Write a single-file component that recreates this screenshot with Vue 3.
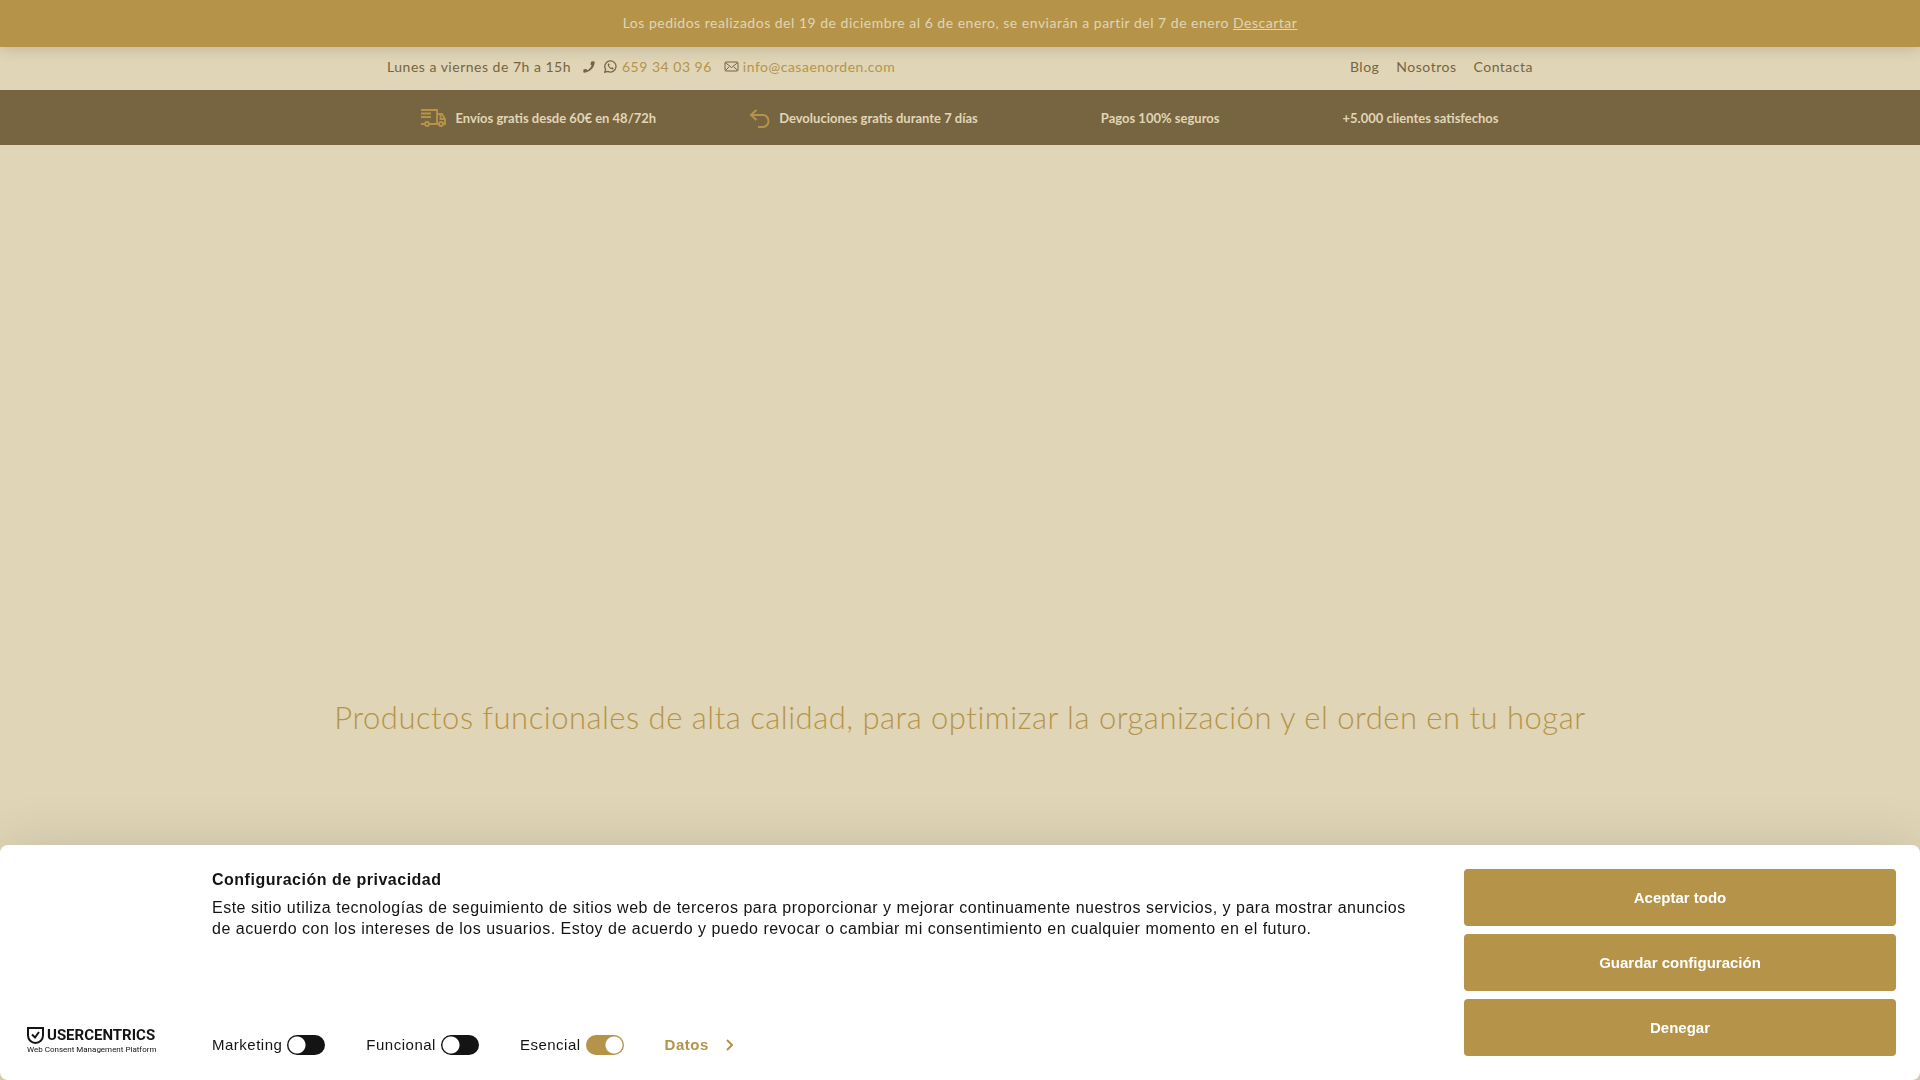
<script setup>
import { ref } from "vue";

const showNotice = ref(true);
const showPrivacy = ref(true);

const menu = ["Blog", "Nosotros", "Contacta"];

const benefits = [
  { text: "Envíos gratis desde 60€ en 48/72h", icon: "truck" },
  { text: "Devoluciones gratis durante 7 días", icon: "return" },
  { text: "Pagos 100% seguros", icon: "" },
  { text: "+5.000 clientes satisfechos", icon: "" },
];

const categories = ref([
  { id: "marketing", label: "Marketing", checked: false, essential: false },
  { id: "functional", label: "Funcional", checked: false, essential: false },
  { id: "essential", label: "Esencial", checked: true, essential: true },
]);

function setAll(value) {
  categories.value.forEach((category) => {
    if (!category.essential) category.checked = value;
  });
  showPrivacy.value = false;
}
</script>

<template>
  <div class="page">
    <div v-if="showNotice" class="notice">
      Los pedidos realizados del 19 de diciembre al 6 de enero, se enviarán a partir del 7 de enero
      <a href="#" @click.prevent="showNotice = false">Descartar</a>
    </div>

    <header>
      <div class="topbar">
        <div class="contact">
          <span>Lunes a viernes de 7h a 15h</span>
          <span class="phone">
            <svg class="icon-phone" viewBox="0 0 12 12" aria-hidden="true">
              <path d="M8.6.5 11 .3c.4 0 .7.3.7.8C11.5 6.8 7 11.3 1.2 11.7c-.5 0-.8-.3-.9-.7L.4 8.9c0-.3.2-.6.6-.6l2-.3c.3 0 .5.1.7.4l.5.9C6.2 8.4 7.8 6.7 8.7 4.6l-.8-.6a.7.7 0 0 1-.3-.7L8 1c0-.3.3-.5.6-.5z" />
            </svg>
            <svg class="icon-whatsapp" viewBox="0 0 13 13" aria-hidden="true">
              <path class="line" d="M.8 12.2l.8-2.9A5.6 5.6 0 1 1 3.8 11.4z" />
              <path d="M4.6 3.500c-.8.3-1 1.2-.7 2 .7 1.900 2 3.200 3.900 3.800.9.300 1.800-.2 1.900-1.200 0-.2-1.500-1-1.700-.9l-.7.8C6.300 7.600 5.500 6.800 5 5.800l.6-.7c.1-.2-.4-1.600-.6-1.600z" />
            </svg>
            <a href="tel:659340396">659 34 03 96</a>
          </span>
          <span class="mail">
            <svg class="icon-mail" viewBox="0 0 15 11" aria-hidden="true">
              <rect x="1" y="1" width="13" height="9" rx="1" />
              <path d="M1.5 1.8 7.5 6.5l6-4.7M1.8 9.2l3.4-3.500M13.2 9.2 9.8 5.7" />
            </svg>
            <a href="mailto:info@casaenorden.com">info@casaenorden.com</a>
          </span>
        </div>
        <nav class="menu">
          <a v-for="item in menu" :key="item" href="#">{{ item }}</a>
        </nav>
      </div>

      <ul class="benefits">
        <li v-for="benefit in benefits" :key="benefit.text">
          <span class="benefit-icon">
            <svg v-if="benefit.icon === 'truck'" width="25" height="18" viewBox="0 0 25 18" aria-hidden="true">
              <path d="M0 1h16v14M0 4.500h10M0 8h10M0 15h4M8 15h10M16 5h5l3 5v5h-2M19.500 5v5H24" />
              <circle cx="6" cy="15" r="2" />
              <circle cx="20" cy="15" r="2" />
            </svg>
            <svg v-else-if="benefit.icon === 'return'" width="21" height="19" viewBox="0 0 21 19" aria-hidden="true">
              <path class="thick" d="M7.500 1 2 6l5.500 5M2 6h12a5.500 6 0 0 1 0 12H9" />
            </svg>
          </span>
          {{ benefit.text }}
        </li>
      </ul>
    </header>

    <main>
      <div class="slider"></div>
      <h1>Productos funcionales de alta calidad, para optimizar la organización y el orden en tu hogar</h1>
    </main>

    <section v-if="showPrivacy" class="privacy" aria-labelledby="privacy-title">
      <a class="brand" href="#">
        <span class="brand-name">
          <svg width="17" height="17" viewBox="0 0 17 17" aria-hidden="true">
            <path d="M1 1h15v7.500a7.500 7.500 0 0 1-15 0z" />
            <path class="check" d="M5 7.500 8 10.500 12 5" />
          </svg>
          USERCENTRICS
        </span>
        <span class="brand-sub">Web Consent Management Platform</span>
      </a>

      <div class="privacy-body">
        <div>
          <h2 id="privacy-title">Configuración de privacidad</h2>
          <p>
            Este sitio utiliza tecnologías de seguimiento de sitios web de terceros para proporcionar y mejorar
            continuamente nuestros servicios, y para mostrar anuncios de acuerdo con los intereses de los usuarios.
            Estoy de acuerdo y puedo revocar o cambiar mi consentimiento en cualquier momento en el futuro.
          </p>
        </div>
        <div class="categories">
          <div v-for="category in categories" :key="category.id" class="category">
            <label :for="category.id">{{ category.label }}</label>
            <input
              :id="category.id"
              v-model="category.checked"
              type="checkbox"
              class="toggle"
              @click="category.essential && $event.preventDefault()"
            />
          </div>
          <button type="button" class="more">
            Datos
            <svg width="7" height="12" viewBox="0 0 7 12" aria-hidden="true">
              <path d="M1 1l5 5-5 5" />
            </svg>
          </button>
        </div>
      </div>

      <div class="actions">
        <button type="button" @click="setAll(true)">Aceptar todo</button>
        <button type="button" @click="showPrivacy = false">Guardar configuración</button>
        <button type="button" @click="setAll(false)">Denegar</button>
      </div>
    </section>
  </div>
</template>

<style>
body {
  background-color: #e0d5b6;
}
</style>

<style scoped>
.page {
  --gold: #b5944a;
  --sand: #e0d5b6;
  --brown: #776541;
  min-height: 100vh;
  background-color: var(--sand);
  color: var(--brown);
  font-family: Lato, sans-serif;
  font-size: 14px;
  line-height: 20px;
  letter-spacing: 0.5px;
}

.notice {
  position: relative;
  padding: 13px 20px 14px;
  background-color: var(--gold);
  color: var(--sand);
  text-align: center;
  box-shadow: 0 2px 16px rgba(0, 0, 0, 0.15);
}
.notice a {
  color: inherit;
}

.topbar {
  display: flex;
  justify-content: space-between;
  align-items: center;
  max-width: 1146px;
  min-height: 39px;
  margin: 0 auto;
  padding-bottom: 4px;
}
.contact,
.phone,
.mail,
.menu {
  display: flex;
  align-items: center;
}
.contact {
  gap: 12px;
}
.menu {
  gap: 17px;
}
.phone a,
.mail a {
  color: var(--gold);
  text-decoration: none;
}
.menu a {
  color: inherit;
  text-decoration: none;
}
.icon-phone {
  width: 12px;
  height: 12px;
  margin-right: 9px;
  fill: var(--brown);
}
.icon-whatsapp {
  width: 13px;
  height: 13px;
  margin-right: 5px;
  fill: var(--brown);
}
.icon-whatsapp .line {
  fill: none;
  stroke: var(--brown);
  stroke-width: 1.3;
}
.icon-mail {
  width: 15px;
  height: 11px;
  margin-right: 4px;
  fill: none;
  stroke: var(--brown);
}

.benefits {
  display: flex;
  justify-content: center;
  gap: 93px;
  margin: 0;
  padding: 18px 20px 17px;
  background-color: var(--brown);
  color: var(--sand);
  font-size: 13px;
  font-weight: 700;
  letter-spacing: 0;
  list-style: none;
}
.benefits li {
  display: flex;
  align-items: center;
  gap: 9px;
}
.benefit-icon {
  display: flex;
  min-width: 21px;
}
.benefit-icon svg {
  fill: none;
  stroke: var(--gold);
  stroke-width: 1.8;
}
.benefit-icon .thick {
  stroke-width: 2;
}

.slider {
  height: 50vh;
}
h1 {
  margin: 0;
  padding: 12px 20px;
  color: var(--gold);
  font-size: 31px;
  font-weight: 300;
  line-height: 40px;
  text-align: center;
}

.privacy {
  position: fixed;
  right: 0;
  bottom: 0;
  left: 0;
  display: flex;
  padding: 24px;
  border-radius: 8px;
  background-color: #fff;
  color: #141414;
  box-shadow: 0 8px 60px rgba(50, 50, 50, 0.2);
  font-family: "Liberation Sans", Arial, sans-serif;
  font-size: 16px;
}
.brand {
  display: flex;
  flex-direction: column;
  justify-content: flex-end;
  width: 185px;
  padding-left: 3px;
  box-sizing: border-box;
  color: inherit;
  font-family: Roboto, sans-serif;
  letter-spacing: 0;
  text-decoration: none;
}
.brand-name {
  display: flex;
  align-items: center;
  gap: 3px;
  font-size: 15px;
  font-weight: 700;
  line-height: 18px;
}
.brand-name svg {
  fill: none;
  stroke: #141414;
  stroke-width: 2;
}
.brand-sub {
  font-size: 8px;
  line-height: 12px;
}
.privacy-body {
  display: flex;
  flex: 1;
  flex-direction: column;
  justify-content: space-between;
  margin: 0 48px 0 3px;
}
h2 {
  margin: 0 0 7px;
  font-size: 16px;
  line-height: 21px;
}
p {
  margin: 0;
  line-height: 21px;
}
.categories {
  display: flex;
  align-items: center;
  gap: 41px;
  padding-bottom: 1px;
  font-size: 15px;
}
.category {
  display: flex;
  align-items: center;
  gap: 5px;
}
.toggle {
  width: 38px;
  height: 20px;
  margin: 0;
  border-radius: 10px;
  appearance: none;
  background: radial-gradient(circle at 10px 10px, #fff 8px, transparent 9px) #141414;
}
.toggle:checked {
  background: radial-gradient(circle at 28px 10px, #fff 8px, transparent 9px) var(--gold);
}
.more {
  display: flex;
  align-items: center;
  gap: 17px;
  padding: 0;
  border: 0;
  background: none;
  color: var(--gold);
  font: inherit;
  font-weight: 700;
  letter-spacing: inherit;
}
.more svg {
  fill: none;
  stroke: var(--gold);
  stroke-width: 2;
}

.actions {
  display: flex;
  flex-direction: column;
  gap: 8px;
  width: 432px;
}
.actions button {
  height: 57px;
  border: 0;
  border-radius: 4px;
  background-color: var(--gold);
  color: #fff;
  font-family: inherit;
  font-size: 15px;
  font-weight: 700;
}
</style>
